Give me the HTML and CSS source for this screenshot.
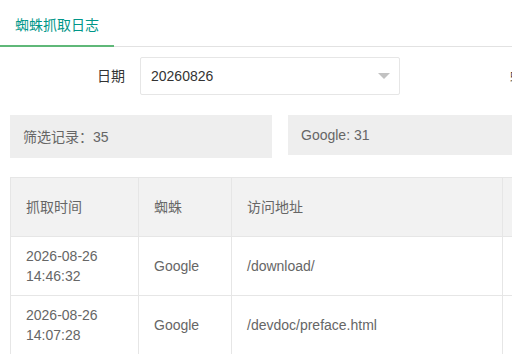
FILE: index.html
```html
<!DOCTYPE html>
<html lang="zh-CN">
<head>
  <meta charset="UTF-8">
  <meta name="viewport" content="width=device-width, initial-scale=1.0">
  <title>蜘蛛抓取日志</title>
  <link rel="stylesheet" href="styles.css">
</head>
<body>
  <ul class="tab-title">
    <li class="this">蜘蛛抓取日志</li>
  </ul>

  <div class="search-form">
    <div class="form-item">
      <label class="form-label">日期</label>
      <div class="select">
        <span class="select-value">20260826</span>
        <i class="edge"></i>
      </div>
    </div>
    <div class="form-item">
      <label class="form-label next">蜘蛛</label>
    </div>
  </div>

  <div class="stats">
    <div class="stat stat-total">筛选记录：35</div>
    <div class="stat">Google: 31</div>
  </div>

  <table class="log-table">
    <colgroup>
      <col style="width: 128px">
      <col style="width: 93px">
      <col style="width: 271px">
      <col style="width: 160px">
    </colgroup>
    <thead>
      <tr>
        <th>抓取时间</th>
        <th>蜘蛛</th>
        <th>访问地址</th>
        <th></th>
      </tr>
    </thead>
    <tbody>
      <tr>
        <td>2026-08-26<br>14:46:32</td>
        <td>Google</td>
        <td>/download/</td>
        <td></td>
      </tr>
      <tr>
        <td>2026-08-26<br>14:07:28</td>
        <td>Google</td>
        <td>/devdoc/preface.html</td>
        <td></td>
      </tr>
    </tbody>
  </table>
</body>
</html>
```

FILE: styles.css
```css
html, body {
  margin: 0;
  padding: 0;
  overflow: hidden;
}
body {
  width: 512px;
  height: 354px;
  font-family: "Liberation Sans", Arial, "Noto Sans CJK SC", sans-serif;
  font-size: 14px;
  color: #666;
}
.tab-title {
  list-style: none;
  margin: 5px 0 0 0;
  padding: 0;
  height: 41px;
  border-bottom: 1px solid #e2e2e2;
  display: flex;
}
.tab-title li {
  position: relative;
  height: 41px;
  line-height: 40px;
  padding: 0 15px;
  color: #333;
}
.tab-title li.this {
  color: #009688;
}
.tab-title li.this:after {
  content: "";
  position: absolute;
  left: 0;
  right: 0;
  bottom: -1px;
  height: 2px;
  background: #5fb878;
}
.search-form {
  display: flex;
  padding: 10px 0 0 30px;
  white-space: nowrap;
}
.form-item {
  display: flex;
  align-items: center;
}
.form-label {
  width: 80px;
  padding: 0 15px;
  text-align: right;
  color: #333;
  line-height: 20px;
}
.form-label.next {
  padding-left: 110px;
  text-align: left;
}
.select {
  position: relative;
  box-sizing: border-box;
  width: 260px;
  height: 38px;
  border: 1px solid #e6e6e6;
  border-radius: 2px;
  padding-left: 10px;
  line-height: 36px;
  color: #333;
  background: #fff;
}
.select .edge {
  position: absolute;
  right: 9px;
  top: 15px;
  width: 0;
  height: 0;
  border-left: 6px solid transparent;
  border-right: 6px solid transparent;
  border-top: 6px solid #c2c2c2;
}
.stats {
  display: flex;
  align-items: flex-start;
  gap: 16px;
  margin: 20px 0 0 10px;
  white-space: nowrap;
}
.stat {
  flex: none;
  width: 262px;
  height: 40px;
  line-height: 40px;
  padding-left: 13px;
  box-sizing: border-box;
  background: #eee;
  color: #666;
}
.stat-total {
  height: 43px;
  line-height: 45px;
}
.log-table {
  margin: 19px 0 0 10px;
  border-collapse: collapse;
  table-layout: fixed;
  width: 652px;
  color: #666;
}
.log-table th,
.log-table td {
  border: 1px solid #e6e6e6;
  padding: 9px 15px;
  line-height: 20px;
  text-align: left;
  font-weight: normal;
  white-space: nowrap;
}
.log-table th {
  background: #f2f2f2;
  padding-top: 19px;
  padding-bottom: 19px;
}
```
